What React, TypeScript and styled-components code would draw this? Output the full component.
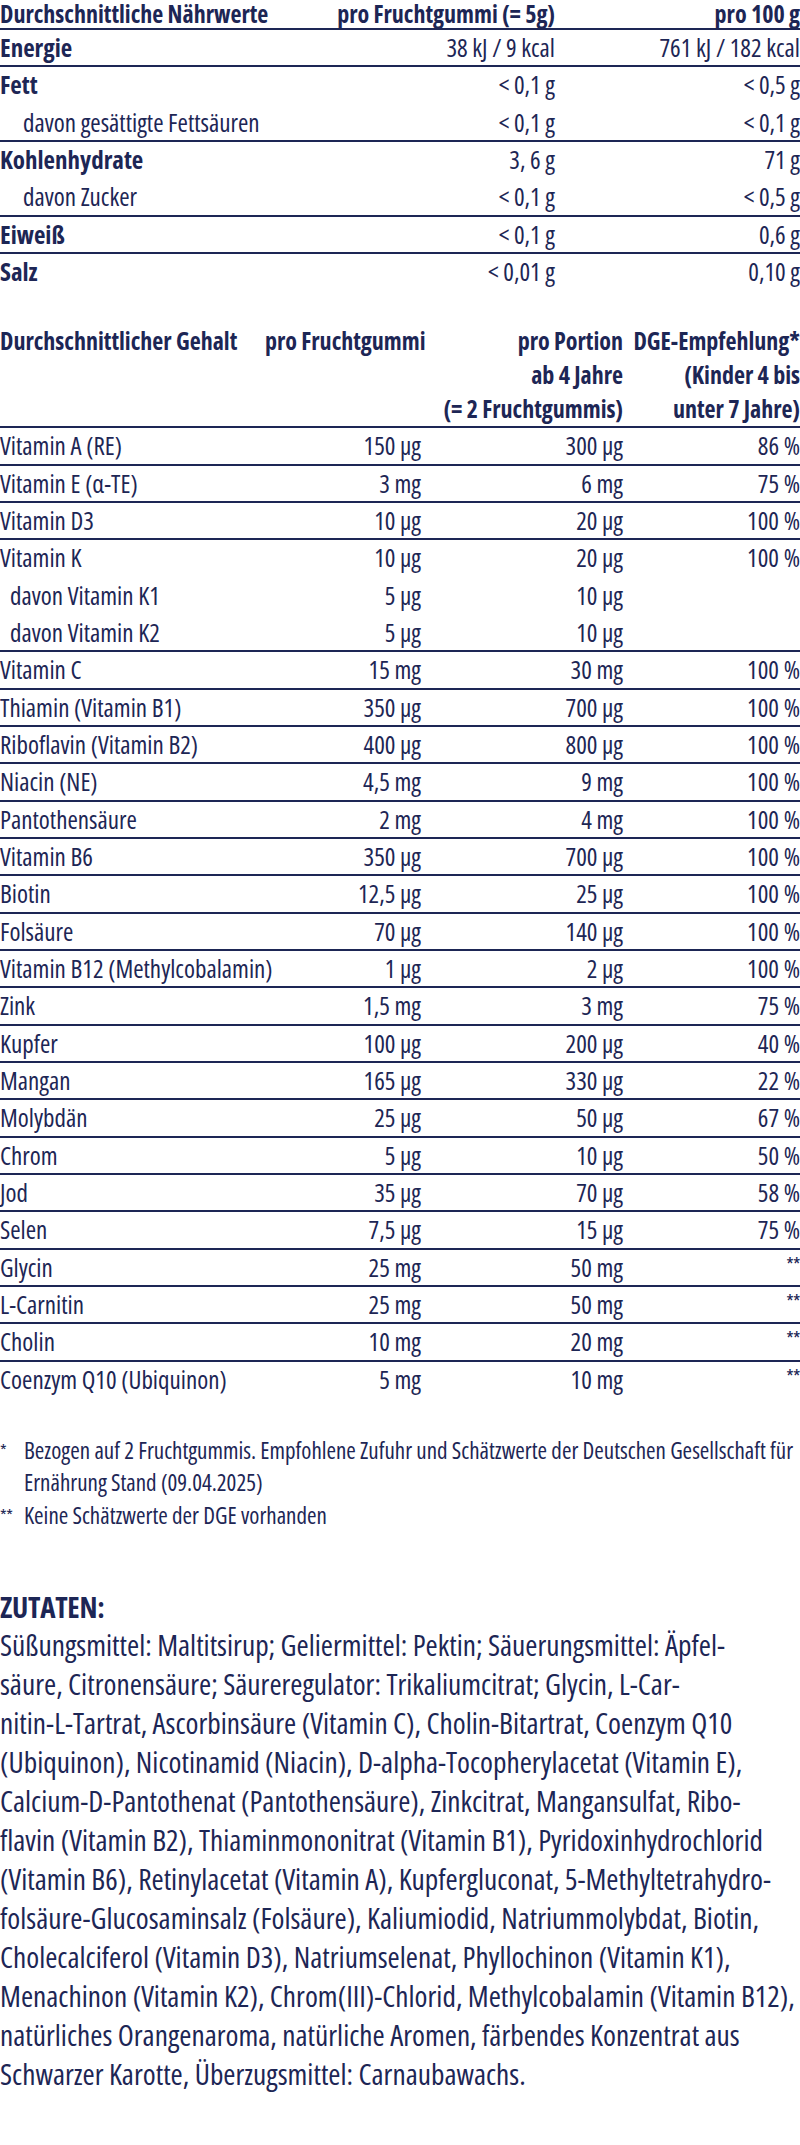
import React from "react";
import styled, { createGlobalStyle } from "styled-components";

const NAVY = "#1d2655";

const GlobalStyle = createGlobalStyle`
  html, body { margin: 0; padding: 0; background: #ffffff; }
  body {
    font-family: "Open Sans", "Liberation Sans", sans-serif;
    font-stretch: 75%;
    color: ${NAVY};
  }
`;

const Page = styled.main`
  width: 800px;
  display: flex;
  flex-direction: column;
`;

/* ---------- Nährwerte table ---------- */

const NutritionTable = styled.section`
  display: grid;
  grid-template-columns: 1fr 245px 245px;
  font-size: 25px;
`;

const NHead = styled.div<{ $align?: "left" | "right" }>`
  font-size: 24px;
  font-weight: 700;
  line-height: 28px;
  text-align: ${(p) => p.$align ?? "right"};
  border-bottom: 2px solid ${NAVY};
  white-space: nowrap;
`;

const NCell = styled.div<{ $align?: "left" | "right"; $line: boolean; $bold?: boolean; $sub?: boolean }>`
  height: 37.33px;
  box-sizing: border-box;
  line-height: 35.33px;
  text-align: ${(p) => p.$align ?? "right"};
  font-weight: ${(p) => (p.$bold ? 700 : 400)};
  padding-left: ${(p) => (p.$sub ? "23px" : "0")};
  border-bottom: 2px solid ${(p) => (p.$line ? NAVY : "transparent")};
  white-space: nowrap;
`;

/* ---------- Vitamin table ---------- */

const VitaminTable = styled.section`
  margin-top: 33px;
  display: grid;
  grid-template-columns: 265px 156px 202px 177px;
  font-size: 25px;
`;

const VHead = styled.div<{ $align?: "left" | "right" }>`
  font-size: 24px;
  font-weight: 700;
  line-height: 34px;
  text-align: ${(p) => p.$align ?? "right"};
  border-bottom: 2px solid ${NAVY};
  white-space: nowrap;
`;

const VCell = styled.div<{ $align?: "left" | "right"; $line: boolean; $sub?: boolean }>`
  height: 37.33px;
  box-sizing: border-box;
  line-height: 35.33px;
  text-align: ${(p) => p.$align ?? "right"};
  padding-left: ${(p) => (p.$sub ? "10px" : "0")};
  border-bottom: 2px solid ${(p) => (p.$line ? NAVY : "transparent")};
  white-space: nowrap;
`;

const Stars = styled.span`
  font-size: 19px;
  vertical-align: 5px;
  line-height: 0;
  letter-spacing: -0.5px;
`;

/* ---------- Footnotes ---------- */

const Footnotes = styled.section`
  margin-top: 35px;
  display: grid;
  grid-template-columns: 24px 1fr;
  font-size: 23px;
  line-height: 32.5px;
`;

const Mark = styled.span`
  font-size: 17px;
  line-height: 32.5px;
  letter-spacing: -0.5px;
`;

const NoteText = styled.div`
  white-space: nowrap;
`;

/* ---------- Zutaten ---------- */

const Ingredients = styled.section`
  margin-top: 56px;
  display: flex;
  flex-direction: column;
`;

const Heading = styled.h2`
  margin: 0;
  font-size: 29px;
  font-weight: 700;
  line-height: 39px;
  letter-spacing: -0.3px;
`;

const IngText = styled.p`
  margin: 0;
`;

const IngLine = styled.span`
  display: block;
  font-size: 29.4px;
  line-height: 39px;
  white-space: nowrap;
`;

type NRow = { label: string; a: string; b: string; bold?: boolean; sub?: boolean; line: boolean };

const nutrition: NRow[] = [
  { label: "Energie", a: "38 kJ / 9 kcal", b: "761 kJ / 182 kcal", bold: true, line: true },
  { label: "Fett", a: "< 0,1 g", b: "< 0,5 g", bold: true, line: false },
  { label: "davon gesättigte Fettsäuren", a: "< 0,1 g", b: "< 0,1 g", sub: true, line: true },
  { label: "Kohlenhydrate", a: "3, 6 g", b: "71 g", bold: true, line: false },
  { label: "davon Zucker", a: "< 0,1 g", b: "< 0,5 g", sub: true, line: true },
  { label: "Eiweiß", a: "< 0,1 g", b: "0,6 g", bold: true, line: true },
  { label: "Salz", a: "< 0,01 g", b: "0,10 g", bold: true, line: false },
];

type VRow = { label: string; a: string; b: string; c: string; sub?: boolean; line?: boolean };

const vitamins: VRow[] = [
  { label: "Vitamin A (RE)", a: "150 µg", b: "300 µg", c: "86 %" },
  { label: "Vitamin E (α-TE)", a: "3 mg", b: "6 mg", c: "75 %" },
  { label: "Vitamin D3", a: "10 µg", b: "20 µg", c: "100 %" },
  { label: "Vitamin K", a: "10 µg", b: "20 µg", c: "100 %", line: false },
  { label: "davon Vitamin K1", a: "5 µg", b: "10 µg", c: "", sub: true, line: false },
  { label: "davon Vitamin K2", a: "5 µg", b: "10 µg", c: "", sub: true },
  { label: "Vitamin C", a: "15 mg", b: "30 mg", c: "100 %" },
  { label: "Thiamin (Vitamin B1)", a: "350 µg", b: "700 µg", c: "100 %" },
  { label: "Riboflavin (Vitamin B2)", a: "400 µg", b: "800 µg", c: "100 %" },
  { label: "Niacin (NE)", a: "4,5 mg", b: "9 mg", c: "100 %" },
  { label: "Pantothensäure", a: "2 mg", b: "4 mg", c: "100 %" },
  { label: "Vitamin B6", a: "350 µg", b: "700 µg", c: "100 %" },
  { label: "Biotin", a: "12,5 µg", b: "25 µg", c: "100 %" },
  { label: "Folsäure", a: "70 µg", b: "140 µg", c: "100 %" },
  { label: "Vitamin B12 (Methylcobalamin)", a: "1 µg", b: "2 µg", c: "100 %" },
  { label: "Zink", a: "1,5 mg", b: "3 mg", c: "75 %" },
  { label: "Kupfer", a: "100 µg", b: "200 µg", c: "40 %" },
  { label: "Mangan", a: "165 µg", b: "330 µg", c: "22 %" },
  { label: "Molybdän", a: "25 µg", b: "50 µg", c: "67 %" },
  { label: "Chrom", a: "5 µg", b: "10 µg", c: "50 %" },
  { label: "Jod", a: "35 µg", b: "70 µg", c: "58 %" },
  { label: "Selen", a: "7,5 µg", b: "15 µg", c: "75 %" },
  { label: "Glycin", a: "25 mg", b: "50 mg", c: "**" },
  { label: "L-Carnitin", a: "25 mg", b: "50 mg", c: "**" },
  { label: "Cholin", a: "10 mg", b: "20 mg", c: "**" },
  { label: "Coenzym Q10 (Ubiquinon)", a: "5 mg", b: "10 mg", c: "**", line: false },
];

const ingredientLines = [
  "Süßungsmittel: Maltitsirup; Geliermittel: Pektin; Säuerungsmittel: Äpfel-",
  "säure, Citronensäure; Säureregulator: Trikaliumcitrat; Glycin, L-Car-",
  "nitin-L-Tartrat, Ascorbinsäure (Vitamin C), Cholin-Bitartrat, Coenzym Q10",
  "(Ubiquinon), Nicotinamid (Niacin), D-alpha-Tocopherylacetat (Vitamin E),",
  "Calcium-D-Pantothenat (Pantothensäure), Zinkcitrat, Mangansulfat, Ribo-",
  "flavin (Vitamin B2), Thiaminmononitrat (Vitamin B1), Pyridoxinhydrochlorid",
  "(Vitamin B6), Retinylacetat (Vitamin A), Kupfergluconat, 5-Methyltetrahydro-",
  "folsäure-Glucosaminsalz (Folsäure), Kaliumiodid, Natriummolybdat, Biotin,",
  "Cholecalciferol (Vitamin D3), Natriumselenat, Phyllochinon (Vitamin K1),",
  "Menachinon (Vitamin K2), Chrom(III)-Chlorid, Methylcobalamin (Vitamin B12),",
  "natürliches Orangenaroma, natürliche Aromen, färbendes Konzentrat aus",
  "Schwarzer Karotte, Überzugsmittel: Carnaubawachs.",
];

export default function App() {
  return (
    <>
      <GlobalStyle />
      <Page>
        <NutritionTable>
          <NHead $align="left">Durchschnittliche Nährwerte</NHead>
          <NHead>pro Fruchtgummi (= 5g)</NHead>
          <NHead>pro 100 g</NHead>
          {nutrition.map((r) => (
            <React.Fragment key={r.label}>
              <NCell $align="left" $line={r.line} $bold={r.bold} $sub={r.sub}>
                {r.label}
              </NCell>
              <NCell $line={r.line}>{r.a}</NCell>
              <NCell $line={r.line}>{r.b}</NCell>
            </React.Fragment>
          ))}
        </NutritionTable>

        <VitaminTable>
          <VHead $align="left">Durchschnittlicher Gehalt</VHead>
          <VHead>pro Fruchtgummi</VHead>
          <VHead>
            pro Portion
            <br />
            ab 4 Jahre
            <br />
            (= 2 Fruchtgummis)
          </VHead>
          <VHead>
            DGE-Empfehlung*
            <br />
            (Kinder 4 bis
            <br />
            unter 7 Jahre)
          </VHead>
          {vitamins.map((r) => {
            const line = r.line !== false;
            return (
              <React.Fragment key={r.label}>
                <VCell $align="left" $line={line} $sub={r.sub}>
                  {r.label}
                </VCell>
                <VCell $line={line}>{r.a}</VCell>
                <VCell $line={line}>{r.b}</VCell>
                <VCell $line={line}>{r.c === "**" ? <Stars>**</Stars> : r.c}</VCell>
              </React.Fragment>
            );
          })}
        </VitaminTable>

        <Footnotes>
          <Mark>*</Mark>
          <NoteText>
            Bezogen auf 2 Fruchtgummis. Empfohlene Zufuhr und Schätzwerte der Deutschen Gesellschaft für
            <br />
            Ernährung Stand (09.04.2025)
          </NoteText>
          <Mark>**</Mark>
          <NoteText>Keine Schätzwerte der DGE vorhanden</NoteText>
        </Footnotes>

        <Ingredients>
          <Heading>ZUTATEN:</Heading>
          <IngText>
            {ingredientLines.map((l) => (
              <IngLine key={l}>{l}</IngLine>
            ))}
          </IngText>
        </Ingredients>
      </Page>
    </>
  );
}
